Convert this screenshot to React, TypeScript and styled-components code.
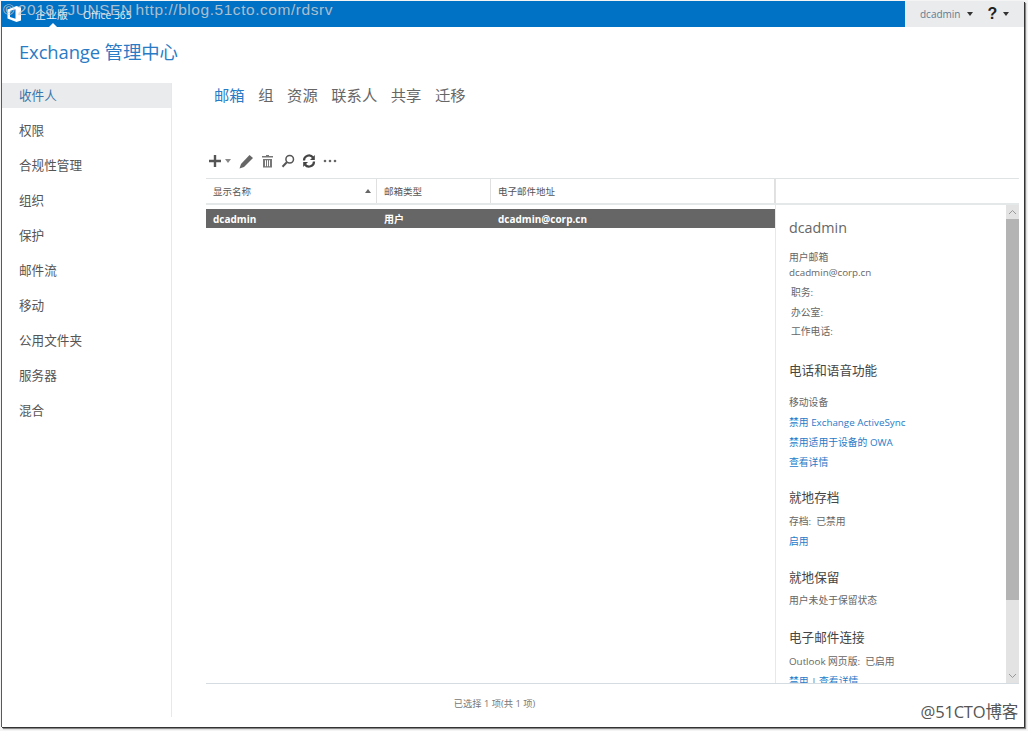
import React from "react";
import styled, { createGlobalStyle } from "styled-components";

const Global = createGlobalStyle`
  html, body { margin: 0; padding: 0; background: #fff; }
  body { font-family: "Open Sans", "Noto Sans CJK SC", sans-serif; overflow: hidden; }
  * { box-sizing: border-box; }
`;
const FONT = `"Open Sans", "Noto Sans CJK SC", sans-serif`;

const Page = styled.div`
  position: relative; width: 1028px; height: 731px; background: #f4f4f4; padding: 1px 4px 4px 1px; overflow: hidden;
`;
const Win = styled.div`
  width: 1023px; height: 726px; background: #fff; display: flex; flex-direction: column;
  box-shadow: 1px 1px 0 #333, 2px 2px 1px #888; border-left: 1px solid #0072c6;
`;
const TopBar = styled.div`
  height: 26px; flex: none; display: flex; background: #0072c6;
`;
const TopLeft = styled.div`
  flex: 1; display: flex; align-items: center; padding-left: 4px; position: relative;
`;
const TopNav = styled.span<{ $ml: number; $fs: number }>`
  margin-left: ${p => p.$ml}px; color: #fff; font-size: ${p => p.$fs}px; line-height: 26px; padding-top: 2px; opacity: .92;
`;
const Caret = styled.i`
  position: absolute; left: 47px; bottom: 0; width: 0; height: 0;
  border: 4px solid transparent; border-top: 0; border-bottom-color: #fff;
`;
const TopRight = styled.div`
  width: 119px; flex: none; background: #eaebec; display: flex; align-items: center; padding-left: 15px; color: #5f7a92; font-size: 10px;
`;
const TinyDown = styled.i<{ $c?: string; $ml: number }>`
  display: inline-block; margin-left: ${p => p.$ml}px; width: 0; height: 0;
  border: 3.5px solid transparent; border-bottom: 0; border-top: 4px solid ${p => p.$c || "#333"};
`;
const Help = styled.span`
  margin-left: 15px; font: bold 16px "Liberation Sans", sans-serif; color: #222;
`;
const Title = styled.div`
  height: 56px; flex: none; padding: 12px 0 0 17px; font-size: 18.4px; line-height: 26px; color: #2a7bc5; letter-spacing: -.1px;
`;
const Body = styled.div`flex: 1; display: flex; min-height: 0; padding-bottom: 10px;`;
const Side = styled.nav`
  width: 170px; flex: none; border-right: 1px solid #e8e8e8;
`;
const SideItem = styled.div<{ $on?: boolean }>`
  height: 25px; margin-bottom: 10px; padding-left: 17px; font-size: 12.6px; line-height: 26px;
  color: ${p => p.$on ? "#3a76ad" : "#555"}; background: ${p => p.$on ? "#eaebec" : "transparent"};
`;
const Main = styled.main`flex: 1; min-width: 0; display: flex; flex-direction: column;`;
const Tabs = styled.div`
  height: 61px; flex: none; display: flex; gap: 13.6px; padding: 1px 0 0 42px; font-size: 15.3px; line-height: 22px; color: #666;
`;
const Tab = styled.span<{ $on?: boolean }>`color: ${p => p.$on ? "#2a7bc5" : "#666"};`;
const Toolbar = styled.div`
  height: 34px; flex: none; padding-left: 36px; display: flex; align-items: center; gap: 7px; color: #555;
`;
const ListWrap = styled.div`flex: 1; min-height: 0; display: flex; flex-direction: column; margin: 0 5px 0 34px;`;
const Panes = styled.div`flex: 1; min-height: 0; display: flex;`;
const Grid = styled.div`width: 569px; flex: none; display: flex; flex-direction: column; border-top: 1px solid #dfe3e3;`;
const Head = styled.div`
  height: 26px; flex: none; display: flex; border-bottom: 2px solid #e4e8e8; font-size: 9.5px; color: #555;
`;
const HeadCell = styled.div<{ $w: number }>`
  width: ${p => p.$w}px; flex: none; position: relative; padding: 0 0 0 7px; line-height: 25px; border-right: 1px solid #e0e0e0;
`;
const SortUp = styled.i`
  position: absolute; right: 5px; top: 10px; width: 0; height: 0;
  border: 3.5px solid transparent; border-top: 0; border-bottom: 4px solid #666;
`;
const Row = styled.div`
  margin-top: 4px; height: 19px; display: flex; background: #666; color: #fff; font-size: 10px; font-weight: 700; line-height: 21px;
`;
const RowCell = styled.div<{ $w: number }>`width: ${p => p.$w}px; flex: none; padding-left: 7px;`;
const Detail = styled.aside`
  flex: 1; min-width: 0; display: flex; flex-direction: column; border-top: 1px solid #dfe3e3;
`;
const DetailHead = styled.div`height: 26px; flex: none; border-left: 1px solid #dfe3e3; border-bottom: 2px solid #e4e8e8;`;
const DetailBody = styled.div`flex: 1; min-height: 0; display: flex; border-left: 1px solid #e8e8e8;`;
const DetailScroll = styled.div`
  flex: 1; min-width: 0; overflow: hidden; padding: 13px 0 0 13px; color: #666; font-size: 9.8px;
`;
const Name = styled.div`font-size: 14.3px; line-height: 20px; color: #666; margin-bottom: 12px;`;
const Line = styled.div<{ $h?: number; $indent?: number; $mb?: number }>`
  height: ${p => p.$h || 20}px; line-height: ${p => p.$h || 20}px; padding-left: ${p => p.$indent || 0}px; margin-bottom: ${p => p.$mb || 0}px; white-space: nowrap;
`;
const Section = styled.div<{ $mt: number; $mb: number }>`
  margin-top: ${p => p.$mt}px; font-size: 12.6px; line-height: 18px; color: #444; margin-bottom: ${p => p.$mb}px;
`;
const A = styled.span`color: #1f7bc8;`;
const Scrollbar = styled.div`
  width: 13px; flex: none; background: #e3e3e3; display: flex; flex-direction: column; align-items: center;
`;
const ScrollBtn = styled.div`height: 14px; width: 13px; flex: none; display: flex; align-items: center; justify-content: center;`;
const Thumb = styled.div`width: 13px; height: 381px; background: #b4b4b4; flex: none;`;
const Spacer = styled.div`flex: 1;`;
const Footer = styled.div`
  height: 34px; flex: none; border-top: 1px solid #d5dde2; font-size: 9.3px; color: #777;
  text-align: center; padding: 13px 236px 0 0; line-height: 14px;
`;
const Watermark = styled.div`
  position: absolute; left: 3px; top: -1px; font: 15.5px/22px "Liberation Sans", sans-serif; letter-spacing: .55px; word-spacing: -2px;
  color: rgba(225,230,235,.72); white-space: nowrap; text-shadow: 0 0 1px rgba(70,70,70,.35); pointer-events: none;
`;
const Stamp = styled.div`
  position: absolute; right: 10px; bottom: 9px; font: 16.5px/20px ${FONT}; color: #555; pointer-events: none; letter-spacing: -.2px;
`;
const Ico = styled.svg`display: block; flex: none;`;

const Logo = () => (
  <Ico width="16" height="18" viewBox="0 0 16 18">
    <path d="M1.5 4.5 L10.5 1 L15 2.5 V15.5 L10.5 17 L1.5 13.5 Z" fill="#fff" />
    <path d="M4 6 L9.5 4.3 V13.7 L4 12 Z" fill="#0072c6" />
  </Ico>
);
const Plus = () => (
  <Ico width="14" height="14" viewBox="0 0 14 14"><path d="M5.8 1h2.4v4.8H13v2.4H8.2V13H5.8V8.2H1V5.8h4.8z" fill="#555" /></Ico>
);
const Pencil = () => (
  <Ico width="16" height="15" viewBox="0 0 16 15"><path d="M11.5 1 L15 4 L6 13 L1.5 14.5 L3 10 Z" fill="#666" /></Ico>
);
const Trash = () => (
  <Ico width="13" height="14" viewBox="0 0 13 14"><path d="M5 1h3v1h4v1.4H1V2h4zM2 5h9v8.5H2zM4 6.2v6h1v-6zm2 0v6h1v-6zm2 0v6h1v-6z" fill="#777" fillRule="evenodd" /></Ico>
);
const Search = () => (
  <Ico width="14" height="14" viewBox="0 0 14 14" fill="none"><circle cx="8.7" cy="5.3" r="3.8" stroke="#555" strokeWidth="1.5" /><path d="M5.8 8.2 L1.5 12.7" stroke="#555" strokeWidth="2" /></Ico>
);
const Refresh = () => (
  <Ico width="14" height="14" viewBox="0 0 14 14" fill="none">
    <path d="M2 6.5 A5 5 0 0 1 11 3.5" stroke="#444" strokeWidth="2.2" />
    <path d="M12.8 1 V6 H8 Z" fill="#444" />
    <path d="M12 7.5 A5 5 0 0 1 3 10.5" stroke="#444" strokeWidth="2.2" />
    <path d="M1.2 13 V8 H6 Z" fill="#444" />
  </Ico>
);
const More = () => (
  <Ico width="14" height="4" viewBox="0 0 14 4"><circle cx="2" cy="2" r="1.3" fill="#666" /><circle cx="7" cy="2" r="1.3" fill="#666" /><circle cx="12" cy="2" r="1.3" fill="#666" /></Ico>
);
const Chevron = ({ up }: { up?: boolean }) => (
  <Ico width="9" height="6" viewBox="0 0 9 6" fill="none"><path d={up ? "M1 5 L4.5 1.5 L8 5" : "M1 1 L4.5 4.5 L8 1"} stroke="#999" /></Ico>
);

const nav = ["收件人", "权限", "合规性管理", "组织", "保护", "邮件流", "移动", "公用文件夹", "服务器", "混合"];
const tabs = ["邮箱", "组", "资源", "联系人", "共享", "迁移"];

export default function App() {
  return (
    <Page>
      <Global />
      <Win>
        <TopBar>
          <TopLeft>
            <Logo />
            <TopNav $ml={13} $fs={11}>企业版</TopNav>
            <TopNav $ml={15} $fs={10.3}>Office 365</TopNav>
            <Caret />
          </TopLeft>
          <TopRight>
            dcadmin<TinyDown $ml={6} />
            <Help>?</Help><TinyDown $ml={6} />
          </TopRight>
        </TopBar>
        <Title>Exchange 管理中心</Title>
        <Body>
          <Side>
            {nav.map((n, i) => <SideItem key={n} $on={i === 0}>{n}</SideItem>)}
          </Side>
          <Main>
            <Tabs>{tabs.map((t, i) => <Tab key={t} $on={i === 0}>{t}</Tab>)}</Tabs>
            <Toolbar>
              <Plus /><TinyDown $c="#888" $ml={-4} /><Pencil /><Trash /><Search /><Refresh /><More />
            </Toolbar>
            <ListWrap>
              <Panes>
                <Grid>
                  <Head>
                    <HeadCell $w={171}>显示名称<SortUp /></HeadCell>
                    <HeadCell $w={114}>邮箱类型</HeadCell>
                    <HeadCell $w={284}>电子邮件地址</HeadCell>
                  </Head>
                  <Row>
                    <RowCell $w={171}>dcadmin</RowCell>
                    <RowCell $w={114}>用户</RowCell>
                    <RowCell $w={284}>dcadmin@corp.cn</RowCell>
                  </Row>
                </Grid>
                <Detail>
                  <DetailHead />
                  <DetailBody>
                    <DetailScroll>
                      <Name>dcadmin</Name>
                      <Line $h={15}>用户邮箱</Line>
                      <Line $h={16} $mb={2}>dcadmin@corp.cn</Line>
                      <Line $h={19.5} $indent={2}>职务:</Line>
                      <Line $h={19.5} $indent={2}>办公室:</Line>
                      <Line $h={19.5} $indent={2}>工作电话:</Line>
                      <Section $mt={20} $mb={13.5}>电话和语音功能</Section>
                      <Line>移动设备</Line>
                      <Line><A>禁用 Exchange ActiveSync</A></Line>
                      <Line><A>禁用适用于设备的 OWA</A></Line>
                      <Line><A>查看详情</A></Line>
                      <Section $mt={16} $mb={5}>就地存档</Section>
                      <Line>存档:&nbsp;&nbsp;已禁用</Line>
                      <Line><A>启用</A></Line>
                      <Section $mt={17} $mb={4}>就地保留</Section>
                      <Line>用户未处于保留状态</Line>
                      <Section $mt={18} $mb={5}>电子邮件连接</Section>
                      <Line>Outlook 网页版:&nbsp;&nbsp;已启用</Line>
                      <Line><A>禁用</A> | <A>查看详情</A></Line>
                    </DetailScroll>
                    <Scrollbar>
                      <ScrollBtn><Chevron up /></ScrollBtn>
                      <Thumb />
                      <Spacer />
                      <ScrollBtn><Chevron /></ScrollBtn>
                    </Scrollbar>
                  </DetailBody>
                </Detail>
              </Panes>
              <Footer>已选择 1 项(共 1 项)</Footer>
            </ListWrap>
          </Main>
        </Body>
      </Win>
      <Watermark>© 2018 ZJUNSEN http://blog.51cto.com/rdsrv</Watermark>
      <Stamp>@51CTO博客</Stamp>
    </Page>
  );
}
